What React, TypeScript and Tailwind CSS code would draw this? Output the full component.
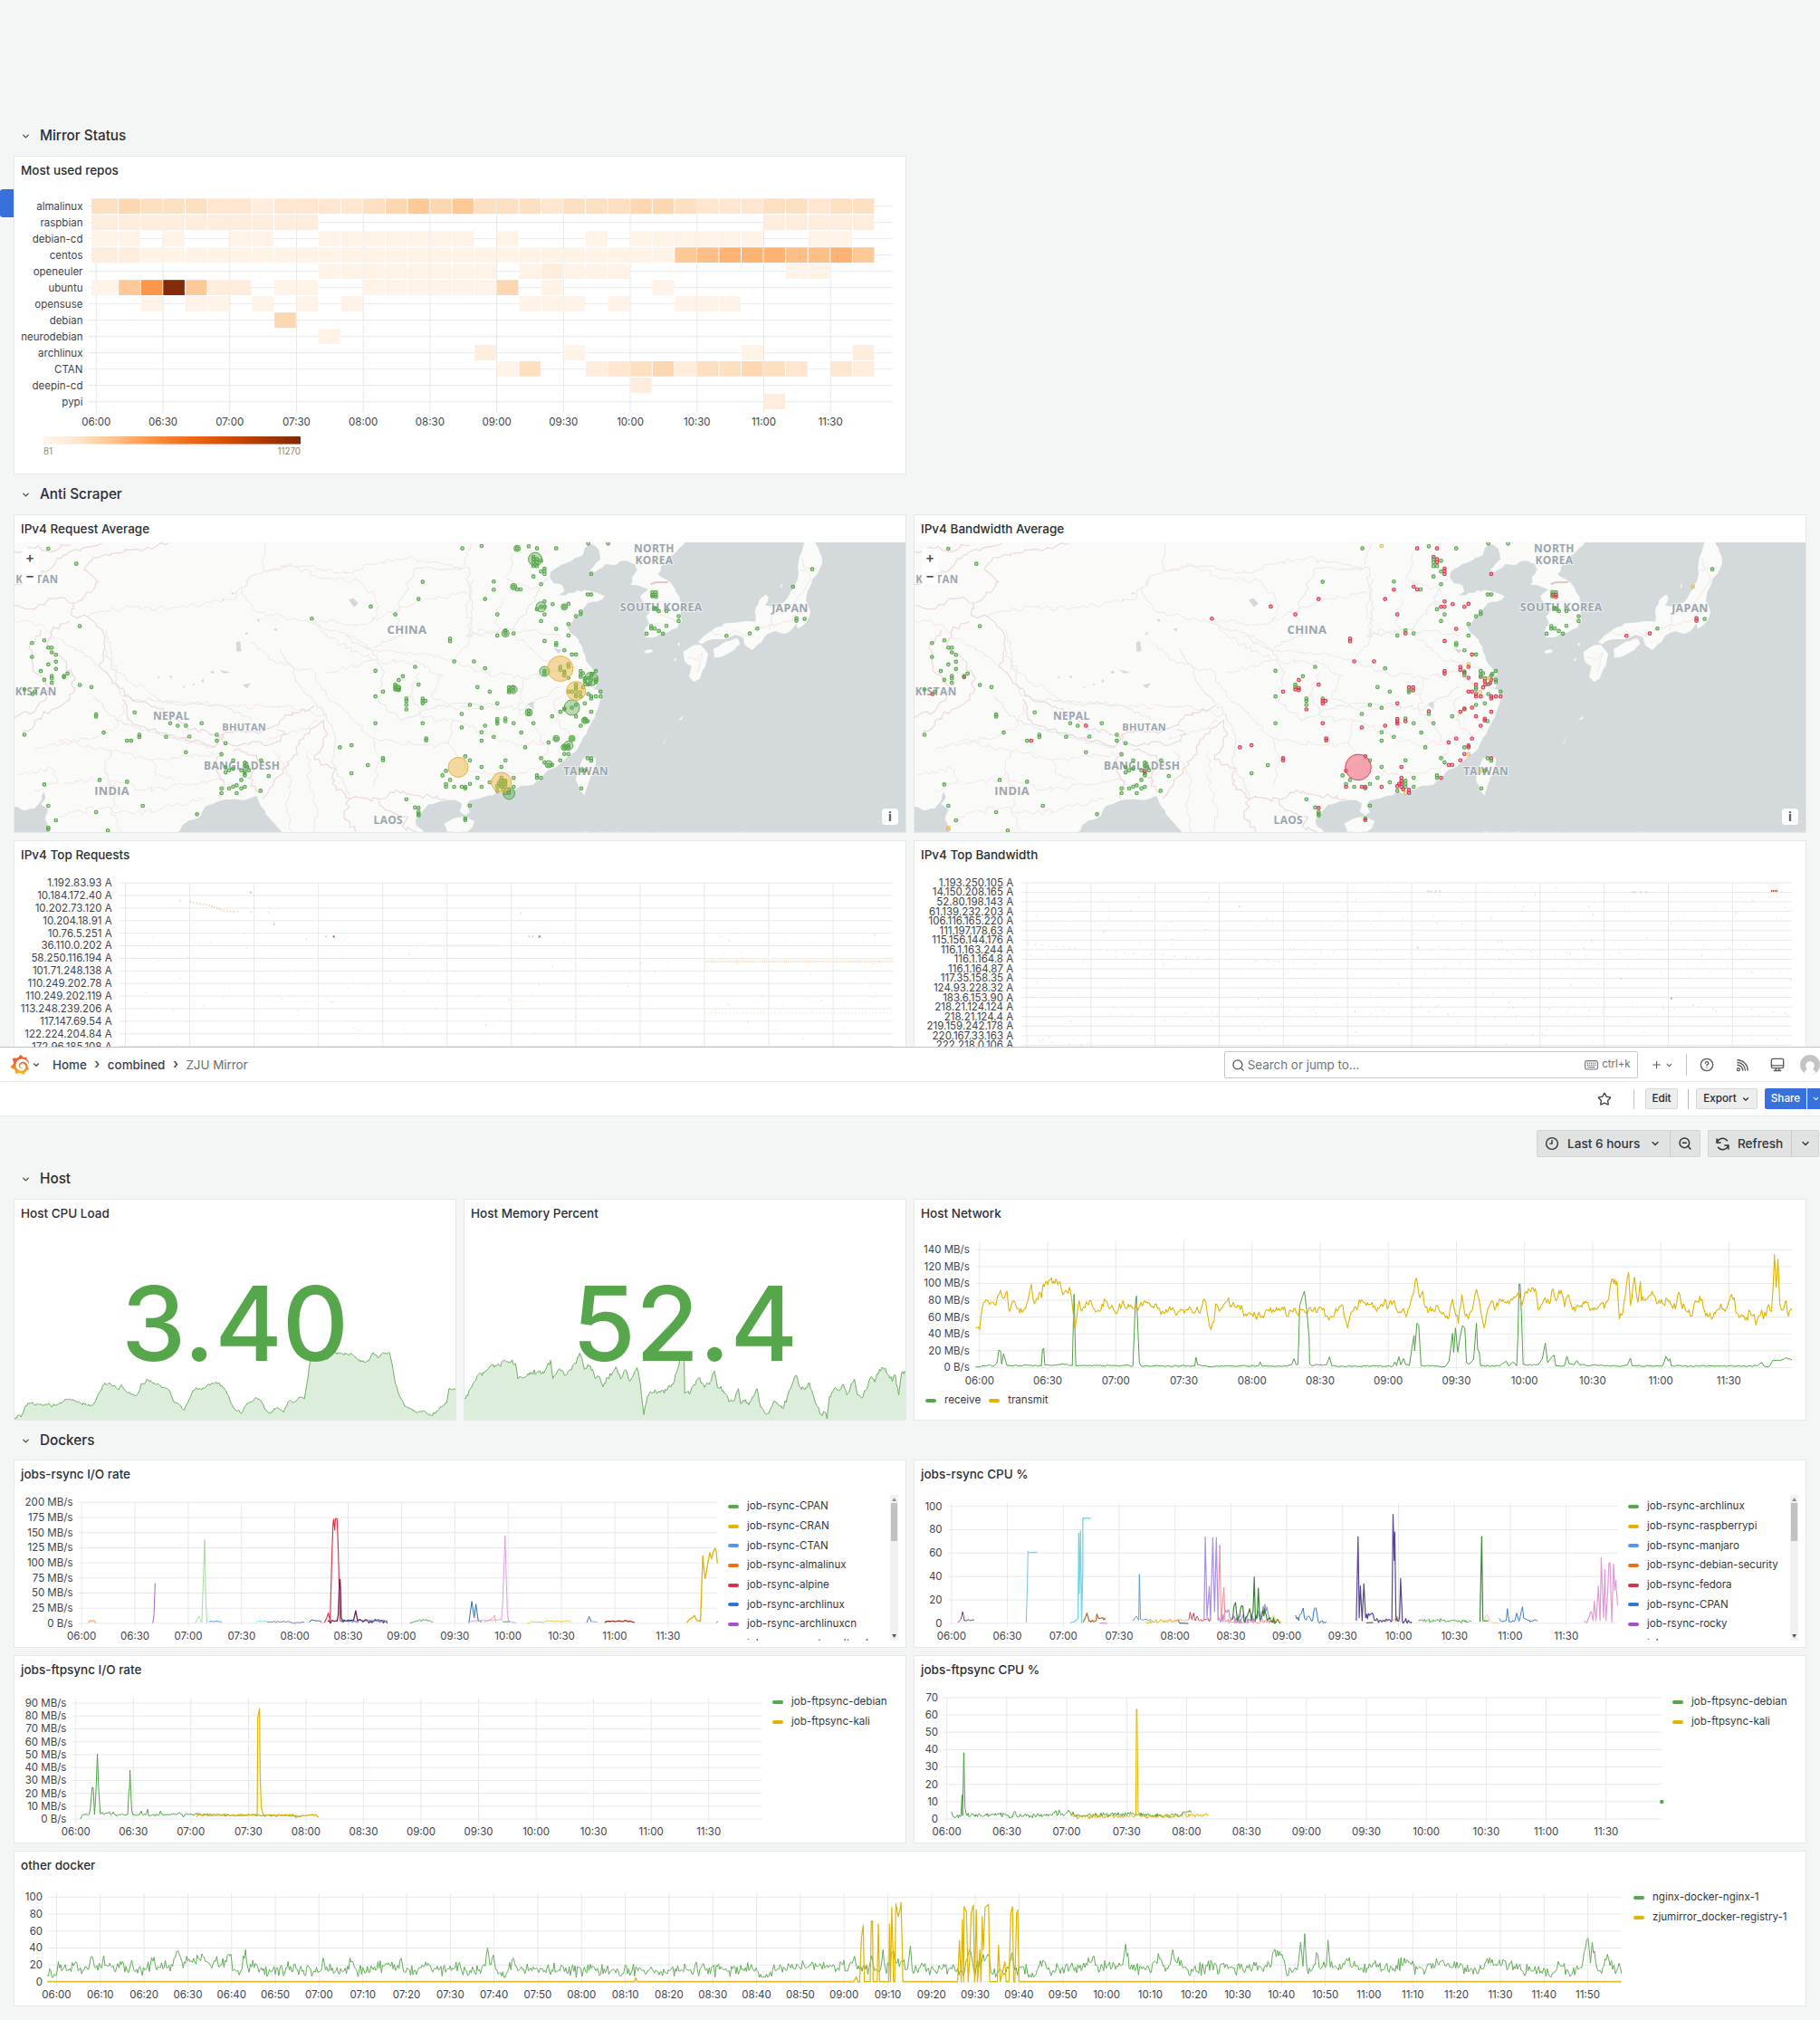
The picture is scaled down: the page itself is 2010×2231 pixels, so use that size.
import React from "react";
import { ChevronDown, Search, Star, ZoomOut, Plus } from "lucide-react";
import { SiGrafana } from "react-icons/si";

/* Plot space: chart geometry is stored on a grid of SX units per pixel across and SY down. */
const SX = 1.5525;
const SY = 3;

type Origin = [number, number];
type Pt = [number, number];

const rng = (seed: number) => {
  let s = seed * 7919 + 13;
  return () => {
    s = (s * 1664525 + 1013904223) % 4294967296;
    return s / 4294967296;
  };
};

const parse = (s: string): Pt[] =>
  s.trim().split(/\s+/).map((p) => p.split(",").map(Number) as Pt);

/* Joins the key points and fills the gaps between them with seeded jitter. */
function trace(keys: string, amp = 0, step = 2.4, seed = 1, floor = 1e9): string {
  const pts = parse(keys);
  const r = rng(seed);
  const out: Pt[] = [];
  pts.forEach((p, i) => {
    out.push(p);
    const q = pts[i + 1];
    if (!q || amp === 0) return;
    const n = Math.floor((q[0] - p[0]) / step);
    for (let k = 1; k < n; k++) {
      const t = k / n;
      const v = r() + r() - 1;
      out.push([p[0] + (q[0] - p[0]) * t, Math.min(floor, p[1] + (q[1] - p[1]) * t + v * amp)]);
    }
  });
  return "M" + out.map((p) => p[0].toFixed(1) + " " + p[1].toFixed(1)).join("L");
}

/* Like trace, but also wobbles sideways, for borders and coastlines. */
function wobble(pts: Pt[], ax: number, ay: number, seed: number, close = false): string {
  const r = rng(seed);
  const out: Pt[] = [];
  pts.forEach((p, i) => {
    out.push(p);
    const q = pts[i + 1];
    if (!q) return;
    const len = Math.hypot((q[0] - p[0]) / SX, (q[1] - p[1]) / SY);
    const n = Math.max(1, Math.floor(len / 4));
    for (let k = 1; k < n; k++) {
      const t = k / n;
      out.push([p[0] + (q[0] - p[0]) * t + (r() - 0.5) * ax, p[1] + (q[1] - p[1]) * t + (r() - 0.5) * ay]);
    }
  });
  return "M" + out.map((p) => p[0].toFixed(1) + " " + p[1].toFixed(1)).join("L") + (close ? "Z" : "");
}

type Line = { d: string; c: string; w?: number; fill?: string };
type Tick = { t: string; at: number };

const clock = (m: number) => `${String(Math.floor(m / 60)).padStart(2, "0")}:${String(m % 60).padStart(2, "0")}`;

function half(x0: number, step: number): Tick[] {
  return Array.from({ length: 12 }, (_, i) => ({ t: clock(360 + i * 30), at: x0 + step * i }));
}

function Plot(props: {
  box: [number, number, number, number];
  o: Origin;
  xs?: Tick[];
  ys?: Tick[];
  area: [number, number, number, number];
  yRight: number;
  xLabel?: number;
  lines?: Line[];
  over?: React.ReactNode;
}) {
  const { box, o, xs = [], ys = [], area, yRight, xLabel, lines = [], over } = props;
  const px = (x: number) => o[0] + x / SX;
  const py = (y: number) => o[1] + y / SY;
  return (
    <svg className="block shrink-0 font-[Inter,sans-serif]" width={box[2]} height={box[3]} viewBox={box.join(" ")}>
      <g stroke="#e6e9ea" strokeWidth={1}>
        {ys.map((t, i) => (
          <line key={i} x1={px(area[0] - 6)} x2={px(area[2])} y1={py(t.at)} y2={py(t.at)} />
        ))}
        {xs.map((t, i) => (
          <line key={i} x1={px(t.at)} x2={px(t.at)} y1={py(area[1])} y2={py(area[3] + 12)} />
        ))}
      </g>
      <g transform={`translate(${o[0]} ${o[1]}) scale(${1 / SX} ${1 / SY})`}>
        {lines.map((l, i) => (
          <path key={i} d={l.d} fill={l.fill || "none"} stroke={l.c} strokeWidth={l.w || 1} strokeLinejoin="round" vectorEffect="non-scaling-stroke" />
        ))}
      </g>
      {over}
      <g className="fill-[#3f4349] text-[11.5px]">
        {ys.map((t, i) => (
          <text key={i} x={px(yRight)} y={py(t.at) + 3.9} textAnchor="end">{t.t}</text>
        ))}
        {xLabel !== undefined && xs.map((t, i) => (
          <text key={i} x={px(t.at)} y={py(xLabel) + 4.4} textAnchor="middle">{t.t}</text>
        ))}
      </g>
    </svg>
  );
}

function Panel({ title, className, children }: { title: string; className: string; children?: React.ReactNode }) {
  return (
    <section className={"flex shrink-0 flex-col overflow-hidden border border-[#e5e8e9] bg-white " + className}>
      <h2 className="flex h-[30px] shrink-0 items-center pl-[7px] text-[13.5px] font-medium text-[#2b2e33]">{title}</h2>
      <div className="relative flex min-h-0 flex-1">{children}</div>
    </section>
  );
}

function Row({ title }: { title: string }) {
  return (
    <div className="flex h-11 items-center gap-[10px] pl-[8px] pt-px text-[15.3px] font-medium text-[#2b2e33]">
      <ChevronDown size={11} strokeWidth={3} className="text-[#4a4e54]" />
      <span>{title}</span>
    </div>
  );
}

function Key({ c, t }: { c: string; t: string }) {
  return (
    <div className="flex h-[21.7px] shrink-0 items-center gap-[9px] whitespace-nowrap text-[11.6px] text-[#34383d]">
      <span className="h-1 w-3 rounded-full" style={{ background: c }} />
      {t}
    </div>
  );
}

function ScrollBar() {
  return (
    <div className="mt-[8px] flex h-[161px] w-[9px] flex-col items-center bg-[#f1f1f1]">
      <span className="h-[9px] text-[5px] leading-[10px] text-[#8a8a8a]">▲</span>
      <span className="h-[42px] w-[7px] bg-[#c1c1c1]" />
      <span className="mt-auto h-[9px] text-[5px] leading-[8px] text-[#505050]">▼</span>
    </div>
  );
}

/* ---------- Icons ---------- */
function Glyph({ size, className, w = 2, children }: { size: number; className?: string; w?: number; children: React.ReactNode }) {
  return (
    <svg width={size} height={size} viewBox="0 0 24 24" fill="none" stroke="currentColor" strokeWidth={w} strokeLinecap="round" strokeLinejoin="round" className={"shrink-0 " + (className || "")}>
      {children}
    </svg>
  );
}
const ClockIcon = () => (
  <Glyph size={16} w={2.1}><circle cx="12" cy="12" r="9.6" /><path d="M12 6.8V12.2H8.6" /></Glyph>
);
const SyncIcon = () => (
  <Glyph size={17} w={2.2}>
    <path d="M3.2 10A9 9 0 0 1 19 6.6" />
    <path d="M3 4.2V10H8.6" />
    <path d="M20.8 14A9 9 0 0 1 5 17.4" />
    <path d="M21 19.8V14H15.4" />
  </Glyph>
);
const FeedIcon = () => (
  <Glyph size={15} className="ml-[24px]" w={2.1}>
    <circle cx="4.6" cy="19.4" r="2.4" />
    <path d="M3 11.6A9.6 9.6 0 0 1 12.4 21" />
    <path d="M3 7.2A14 14 0 0 1 16.8 21" />
    <path d="M3 2.8A18.4 18.4 0 0 1 21.2 21" />
  </Glyph>
);
const ScreenIcon = () => (
  <Glyph size={16} className="ml-[23px]" w={2}>
    <rect x="2" y="2" width="20" height="15.5" rx="2.6" />
    <path d="M2.5 13.2H21.5M9.5 17.5V21.6M14.5 17.5V21.6M6.5 21.8H17.5" />
  </Glyph>
);
const HelpIcon = () => (
  <Glyph size={16} className="ml-[14px]" w={2}>
    <circle cx="12" cy="12" r="10" />
    <path d="M9.6 9.4A2.5 2.5 0 1 1 12.6 11.8Q12 12.2 12 13.3M12 16.6V16.8" />
  </Glyph>
);
const KeysIcon = () => (
  <svg width="15" height="11" viewBox="0 0 15 11" fill="none" stroke="currentColor" className="ml-auto text-[#6f7378]">
    <rect x=".6" y=".6" width="13.8" height="9.4" rx="1.8" strokeWidth="1.1" />
    <path d="M2.6 3.2H12.6M2.6 5.3H12.6" strokeWidth="1.3" strokeDasharray="1.4 .7" />
    <path d="M3.4 7.7H11.6" strokeWidth="1.1" />
  </svg>
);

/* ---------- Heat map ---------- */
const HEAT: Record<string, string> = {
  "1": "#fff2e6", "2": "#feeddd", "3": "#fee6d0", "4": "#fddfc2", "5": "#fdd7b1",
  "6": "#fdc997", "a": "#fdbf86", "7": "#fdb374", "8": "#fd964b", "9": "#832b06",
};
const dots = (n: number) => ".".repeat(n);
const REPOS: [string, string][] = [
  ["almalinux", "45444332333345656444344455433344344"],
  ["raspbian", "2222222222" + dots(20) + "22222"],
  ["debian-cd", "11.1..11..1111111.1...1.111111..11."],
  ["centos", "22111111111111111111111111" + "6a777aa76"],
  ["openeuler", dots(10) + "11111111.12111" + dots(7) + "11.."],
  ["ubuntu", "1689622.11..1111115.1....1" + dots(9)],
  ["opensuse", "..1.11.1.1.1" + dots(7) + "111.1..111" + dots(6)],
  ["debian", dots(8) + "5" + dots(26)],
  ["neurodebian", dots(10) + "1" + dots(24)],
  ["archlinux", dots(17) + "2...1" + dots(7) + "1....2"],
  ["CTAN", dots(18) + "14..23452445" + "43.32"],
  ["deepin-cd", dots(24) + "2" + dots(10)],
  ["pypi", dots(30) + "2" + dots(4)],
];

function HeatMap() {
  const ys = REPOS.map(([t], i) => ({ t, at: 323 + i * 54 }));
  return (
    <Plot
      box={[16, 203, 984, 320]}
      o={[0, 120]}
      area={[157, 298, 1530, 996]}
      yRight={142}
      xLabel={1038}
      ys={ys}
      xs={half(165, 114.45)}
      over={
        <g>
          <g transform={`translate(0 120) scale(${1 / SX} ${1 / SY})`}>
            {REPOS.map(([n, s], r) =>
              s.split("").map((c, k) =>
                c === "." ? null : (
                  <rect key={n + k} x={165.5 + k * 38.14 - (k ? 0 : 8.5)} y={298 + r * 53.9} width={36.6 + (k ? 0 : 8.5)} height={50.5} fill={HEAT[c]} />
                )
              )
            )}
          </g>
          <defs>
            <linearGradient id="oranges">
              <stop offset="0" stopColor="#fff5eb" />
              <stop offset=".13" stopColor="#fee6ce" />
              <stop offset=".27" stopColor="#fdc38d" />
              <stop offset=".42" stopColor="#fd9243" />
              <stop offset=".6" stopColor="#ec620f" />
              <stop offset=".75" stopColor="#cc4602" />
              <stop offset="1" stopColor="#7f2704" />
            </linearGradient>
          </defs>
          <rect x={48} y={482} width={284} height={8.6} rx={1} fill="url(#oranges)" />
          <g className="fill-[#85888c] text-[9.8px]">
            <text x={48} y={502}>81</text>
            <text x={332} y={502} textAnchor="end">11270</text>
          </g>
        </g>
      }
    />
  );
}

/* ---------- Maps ---------- */
const ring = (s: string): Pt[] => {
  const n = s.trim().split(/\s+/).map(Number);
  const out: Pt[] = [];
  for (let i = 0; i < n.length; i += 2) out.push([n[i], n[i + 1]]);
  return out;
};
const SEA = [
  "1175 209 1165 228 1148 255 1134 290 1128 315 1145 335 1158 365 1166 400 1168 440 1170 470 1162 492 1140 510 1125 522 1108 524 1105 505 1113 480 1108 455 1117 430 1105 412 1098 388 1112 366 1098 355 1082 350 1084 325 1093 300 1088 280 1070 270 1052 285 1038 282 1020 308 1012 300 1030 265 1026 230 1014 215 1003 228 1000 250 975 275 958 290 944 308 943 325 950 345 965 352 968 372 958 385 970 385 990 368 1015 372 1037 388 1032 400 1008 410 1000 430 985 460 973 490 978 508 992 530 1000 570 1005 600 1015 625 1026 650 1010 652 1004 664 1024 672 1022 690 1006 690 1028 700 1034 722 1028 745 1020 790 1008 830 994 880 982 910 960 945 940 965 930 992 915 1012 890 1020 878 1030 868 1044 855 1035 845 1048 820 1060 805 1066 800 1082 806 1104 798 1115 788 1100 792 1075 782 1064 768 1064 755 1068 735 1078 725 1100 713 1128 716 1152 728 1172 1556 1172 1556 206 1176 206",
  "22 1085 45 1098 60 1092 72 1062 75 1036 78 1060 70 1078 82 1092 78 1130 84 1172 22 1172",
  "305 1172 318 1140 345 1115 352 1085 372 1070 395 1062 415 1064 440 1050 450 1090 465 1130 485 1172",
];
const LAND = [
  "762 1142 778 1124 800 1120 814 1134 810 1155 800 1170 768 1170",
  "1000 925 1012 914 1022 926 1019 960 1011 1000 1002 1050 994 1030 988 1000 992 960",
  "1380 206 1398 206 1408 250 1410 280 1403 310 1393 332 1385 370 1382 400 1390 440 1380 480 1368 495 1366 478 1352 508 1345 512 1330 503 1312 520 1306 540 1290 566 1278 550 1275 525 1262 515 1240 530 1222 530 1205 546 1197 540 1210 515 1230 490 1250 476 1280 470 1296 472 1295 440 1302 400 1314 382 1318 392 1312 418 1330 422 1346 405 1362 360 1370 310 1370 270 1375 240",
  "1172 572 1190 550 1202 548 1215 580 1210 620 1200 662 1190 672 1182 655 1186 620 1174 602",
  "1225 592 1224 562 1245 538 1265 528 1270 545 1252 575 1236 590",
  "1104 572 1116 563 1120 570 1108 578",
  "1338 352 1342 346 1340 362",
  "1163 800 1172 784 1170 796",
  "1134 880 1146 852 1140 874",
  "1162 545 1166 540 1165 555",
  "1155 600 1160 592 1159 604",
];
const LAKES = "M598 400L606 394 615 412 607 424ZM380 398L384 396 383 404ZM396 374L404 378 399 382ZM405 540L412 536 414 570 406 572ZM360 640L366 634 368 646ZM376 632L396 640 384 644ZM416 682L430 676 424 694ZM345 668L350 662 349 676ZM313 690L318 684 317 692ZM905 745L915 735 916 765ZM420 515L424 505 426 514ZM468 496L476 494 474 504ZM950 560L964 566 958 578ZM440 466L446 462 445 474ZM290 655L294 650 296 660ZM270 655L273 652 274 662ZM330 680L334 676 334 684Z";
const BORDERS = [
  "25,420 60,430 85,395 110,392 125,410 122,450 150,455 175,500 180,560 170,620 200,680 215,720 240,740 270,760 300,790 330,830 380,850 400,840 450,835 480,800 510,775 540,750",
  "25,350 55,330 85,300 110,250 140,230 175,212",
  "25,240 50,225 90,240 120,215",
  "210,730 225,800 270,840 330,870 372,880 375,850",
  "380,845 385,880 470,875 490,845 475,830",
  "380,900 370,940 385,1000 378,1060",
  "400,900 440,915 450,940 425,990 445,1040",
  "450,1060 470,1000 500,930 520,860 555,800 560,850 540,930 575,960 570,1010 600,1060 650,1060 680,1030 720,1050 765,1060",
  "600,1060 590,1110 610,1170",
  "650,1065 670,1100 700,1120 690,1150 715,1170",
  "40,850 60,800 95,760 120,730 130,660 110,600 80,560 90,500 120,470",
  "25,790 60,770 90,700 60,640 50,560 70,500",
  "125,410 140,400 170,340 145,300 160,260 250,230 290,212",
];
const PROVINCES = [
  "150,455 210,430 300,425 400,400 430,320 500,285 600,310 640,280 700,260 790,300 810,209",
  "430,320 415,380 440,440 520,470 600,520 640,570 720,580 780,600",
  "455,209 452,300 500,285",
  "180,500 188,560 200,640 280,740 400,750 520,760 560,790",
  "430,540 470,600 540,640 560,720 600,790 640,860 650,940 640,1020",
  "560,640 640,600 720,610 760,650 740,720 780,760 860,760",
  "800,520 830,500 900,500 960,520",
  "810,330 800,430 810,520 780,600 830,640 900,660 960,640",
  "860,400 850,480 900,540 930,600 990,620",
  "720,640 700,720 730,790 800,810 850,860 900,880 960,860",
  "780,800 770,880 800,960 860,980 920,960",
  "640,860 720,880 770,880",
  "900,660 890,760 920,830 940,900 925,960",
  "880,240 870,330 930,370",
  "640,600 560,520 540,470 620,480 680,440 720,400 800,380",
  "500,285 560,330 620,340 650,420 640,470",
  "25,470 70,480 110,540 170,620",
  "60,900 110,870 190,900 260,930 330,920 380,905",
  "110,1010 180,990 250,1030 330,1010 380,1000",
  "95,1120 170,1090 230,1110 300,1080 350,1060",
  "190,900 180,960 200,1040 190,1110 210,1170",
  "100,870 150,860 200,820 215,740",
  "30,980 90,960 100,1010 60,1030",
  "260,930 270,980 300,1000",
  "470,900 500,1000 490,1080 500,1170",
  "530,900 530,1000 545,1100 540,1170",
  "460,860 520,830 545,800",
  "960,640 990,690 950,740 960,820 985,860",
  "1120,209 1110,260 1095,290",
  "1120,400 1150,410 1130,450 1160,470",
  "1215,505 1240,520 1262,500 1280,520 1300,490 1340,480 1380,440",
  "1320,500 1325,450 1350,430 1385,420",
  "1375,260 1390,330 1370,390 1340,450",
  "1372,300 1404,290",
  "1178,590 1195,600 1205,575 1195,640",
];
const RIVERS = [
  "480,560 520,700 560,780 575,850 570,940 600,1050",
  "590,520 640,570 660,640 650,740 690,800 740,760 800,740 900,760 960,690",
  "640,560 690,520 680,440 710,300 800,290 812,430 800,520 880,500 940,330",
  "160,720 200,800 300,860 370,890",
  "180,560 210,720 280,740 380,750 430,800",
];

const PINS = `83,230 131,280 137,487 76,534 55,543 83,558 89,558 89,574 96,582 55,589 96,605 83,614 96,629 70,636 116,644 110,656r 110,652 89,652 89,660 76,665 89,675 137,682 157,689 42,697 56,712r 60,704 165,780 165,787 231,773 42,847 178,840 292,809 305,817 319,817r 346,809 239,847 239,855 285,854 325,853 372,847 372,867 387,875 218,867 225,867r 319,905 380,912 400,932 448,932 76,1012 171,997 218,1003 461,984 380,1025 393,1025 380,1041 406,1041 447,1033 406,1015 420,1020 400,1019 414,997 414,1025 83,1083 245,1083 165,1104 338,1111 96,1131 83,1155y 83,1161y 185,1165 387,955 393,965 420,940 420,950 427,965 420,975 387,972 414,965 424,955 400,960 420,968r 420,982
793,229 826,221y 887,229r 907,222 921,229r 954,229 1009,213 1043,213 915,257r 921,265r 915,265 921,275r 928,270 915,275 915,288 921,288 934,296r 934,304r 928,306 934,314r 915,322 1014,314r 847,339 725,340 928,348 881,356r 887,365r 893,365 847,366r 718,397r 832,397r 934,405r 1008,382 1014,382 948,414r 975,413r 968,423r 928,423r 934,423r 636,422r 921,431 678,448r 853,448r 934,448 996,439 996,447 988,454 928,470 535,462r 975,480 954,496r 867,501 867,511r 881,511 853,518 975,518 772,528r 772,537r 934,536r 954,543 954,550 968,567 981,581r 988,581 779,604r 813,604r 975,613y 961,622r 975,622r 712,622 832,627 644,635 961,632r 968,637 968,642r 1022,636 934,636r 934,644r 996,636 1000,643 968,650 975,658r 1014,650 691,653 684,666r 678,681 718,681r 678,689 684,692r 678,697r 684,699r 657,704r 819,689 840,704 873,690r 880,690r 873,700 880,700r 873,706 988,681r 1014,665r 996,655r 1009,660y 1003,660 1003,670r 1022,672 1022,665 988,690 1000,690r 1009,680 975,704r 981,704r 988,697 995,706y 988,712r 1009,712 1030,704 1030,720r 1022,720r 1014,720r 1014,727r 988,720r 996,720r 1003,743 988,748 996,648 1016,645 1004,680r 1012,676r 644,720 697,727 697,735 697,748 697,763r 725,727 730,735r 725,743r 725,735r 806,748 853,743r 826,758 792,778 907,769r 907,778 1014,771r 961,771r 968,763 968,760r 981,757r 947,786 988,786r 1003,794r 1008,802 1003,800r 996,817r 867,793 853,795r 853,803r 867,802r 853,810r 881,809 915,809 644,809 725,809r 792,823r 832,817r 826,839 894,840 847,854 731,859r 731,866r 826,867 954,860r 981,860r 941,873r 583,889r 603,882r 901,889 975,883r 968,889 975,889r 968,911r 975,911y 798,919r 806,932 657,925r 657,932r 631,948 928,925 867,932 961,932r 934,939 941,947r 947,947r 1008,925 1014,925r 1014,933 603,975 765,967r 826,954 860,954r 759,982 772,997 819,990 881,990 921,982 921,990 928,990r 840,1005 765,1011 765,1020r 779,1020 792,1020r 798,1025 806,1010 798,1020r 826,1020r 860,990r 860,1000r 867,1000 860,1010r 853,1018r 867,1010 860,1020r 853,1033 867,1020 873,1030r 867,1040y 873,1040r 863,1028r 856,1010r 881,1020 997,1025 997,965y 1003,965 697,1061 712,1088 718,1090r 718,1103 718,1110 718,1115 806,1082 798,1125 798,1130r
1119,374 1125,374 1119,383r 1125,383r 1119,388 1125,390r 1122,428 1125,430 1130,437 1143,437 1164,454 1164,470 1143,486 1117,487 1117,495 1123,495 1130,503 1137,512 1109,512 1393,298 1360,356y 1366,461r 1366,469r 1380,463 1299,495 1286,511r 1246,519r`;

const BUBBLES_GREEN = "918,265,7.5 887,229,3.5 881,356,3.5 928,423,5.5 968,423,3.5 867,511,4 934,637,5.5 1014,662,7.5 981,757,8.5 880,697,4.5 907,773,4 975,883,5 941,945,4 873,1042,6.5 954,860,3.5 1003,800,3.5 682,692,3.5 981,860,3.5 968,889,3.5 861,1008,5";
const BUBBLES_YELLOW = "961,628,14 988,702,10.5 786,955,11 860,1005,11";
const PLACES: [string, number, number, number][] = [
  ["CHINA", 698, 499, 13], ["NORTH", 1122, 230, 12], ["KOREA", 1122, 267, 12], ["SOUTH KOREA", 1134, 425, 12.4],
  ["JAPAN", 1355, 426, 12.4], ["NEPAL", 294, 786, 12], ["BHUTAN", 419, 823, 11], ["BANGLADESH", 415, 950, 12],
  ["INDIA", 192, 1034, 12.8], ["LAOS", 666, 1130, 12], ["TAIWAN", 1005, 968, 11.8],
];

function GeoMap({ mode }: { mode: "req" | "bw" }) {
  const paint: Record<string, [string, string]> = {
    g: ["#56a64b66", "#56a64b"], r: ["#e02f4466", "#d9364b"], y: ["#f2cc0c44", "#e3bb55"],
  };
  const bubble = (list: string, fill: string, stroke: string) =>
    list.split(" ").map((b) => {
      const [x, y, r] = b.split(",").map(Number);
      return <ellipse key={b} cx={x} cy={y} rx={r * SX} ry={r * SY} fill={fill} stroke={stroke} strokeWidth={1} vectorEffect="non-scaling-stroke" />;
    });
  return (
    <>
      <svg className="block h-full w-full bg-[#fafaf8]" viewBox="25 209 1528 961" preserveAspectRatio="none">
        {PROVINCES.slice(0, 28).map((k, i) => <path key={k} d={wobble(parse(k), 9, 18, i + 31)} fill="none" stroke="#f3e6e5" strokeWidth={1} vectorEffect="non-scaling-stroke" />)}
        {RIVERS.map((k, i) => <path key={k} d={wobble(parse(k), 8, 16, i + 61)} fill="none" stroke="#e6eaec" strokeWidth={1.1} vectorEffect="non-scaling-stroke" />)}
        {SEA.map((d, i) => <path key={d} d={wobble(ring(d), 4, 7, i + 5, true)} fill="#d4dadc" />)}
        {LAND.map((d, i) => <path key={d} d={wobble(ring(d), 3, 5, i + 15, true)} fill="#fafaf8" />)}
        <path d={LAKES} fill="#d4dadc" />
        {PROVINCES.slice(28).map((k, i) => <path key={k} d={wobble(parse(k), 6, 12, i + 71)} fill="none" stroke="#f3e6e5" strokeWidth={1} vectorEffect="non-scaling-stroke" />)}
        {BORDERS.map((k, i) => <path key={k} d={wobble(parse(k), 9, 18, i + 3)} fill="none" stroke="#ecd6d8" strokeWidth={1.1} vectorEffect="non-scaling-stroke" />)}
        <path d="M1116 348L1124 342 1146 341" fill="none" stroke="#e3c3c8" strokeWidth={2} vectorEffect="non-scaling-stroke" />
        <g transform={`scale(${SX} ${SY})`} className="font-['Open_Sans',sans-serif] font-bold" fill="#9aa5af" stroke="#fafaf8" strokeWidth={2} paintOrder="stroke" strokeOpacity={0.7} letterSpacing={0.3}>
          {PLACES.map(([t, x, y, s]) => (
            <text key={t} x={x / SX} y={y / SY + s * 0.36} fontSize={s} textAnchor="middle">{t}</text>
          ))}
          <text x={27 / SX} y={330 / SY + 4.3} fontSize={11.5}>K</text>
          <text x={100 / SX} y={330 / SY + 4.3} fontSize={11.5} textAnchor="end">TAN</text>
          <text x={26 / SX} y={705 / SY + 4.3} fontSize={11.8} letterSpacing={0.6}>KISTAN</text>
        </g>
        {PINS.split(/\s+/).map((p, i) => {
          const m = p.match(/^(\d+),(\d+)([ry]?)$/);
          if (!m) return null;
          const k = mode === "bw" && m[3] ? m[3] : "g";
          return <ellipse key={i} cx={+m[1]} cy={+m[2]} rx={2.8} ry={5.3} fill={paint[k][0]} stroke={paint[k][1]} strokeWidth={1.1} vectorEffect="non-scaling-stroke" />;
        })}
        {mode === "req" ? (
          <>
            {bubble(BUBBLES_GREEN, "#56a64b66", "#56a64b")}
            {bubble(BUBBLES_YELLOW, "#ecb84180", "#e6b54a")}
          </>
        ) : (
          bubble("786,955,14.3", "#ee6a7e99", "#d9475d")
        )}
      </svg>
      <div className="absolute left-[8px] top-[7px] flex w-[18px] flex-col gap-px text-center text-[15px] font-semibold leading-[19px] text-[#4d5156]">
        <span className="h-[19px] rounded-t-sm bg-white">+</span>
        <span className="h-[19px] rounded-b-sm bg-white">−</span>
      </div>
      <div className="absolute bottom-[8px] right-[8px] h-[18px] w-[18px] rounded-sm bg-white text-center text-[14px] font-bold leading-[18px] text-[#55595e]">i</div>
    </>
  );
}

/* ---------- Top talkers ---------- */
const REQ_IPS = ["1.192.83.93", "10.184.172.40", "10.202.73.120", "10.204.18.91", "10.76.5.251", "36.110.0.202", "58.250.116.194", "101.71.248.138", "110.249.202.78", "110.249.202.119", "113.248.239.206", "117.147.69.54", "122.224.204.84", "172.96.185.108"];
const BW_IPS = ["1.193.250.105", "14.150.208.165", "52.80.198.143", "61.139.232.203", "106.116.165.220", "111.197.178.63", "115.156.144.176", "116.1.163.244", "116.1.164.8", "116.1.164.87", "117.35.158.35", "124.93.228.32", "183.6.153.90", "218.21.124.124", "218.21.124.4", "219.159.242.178", "220.167.33.163", "222.218.0.106"];

function specks(n: number, seed: number, x0: number, x1: number, y0: number, y1: number) {
  const r = rng(seed);
  return Array.from({ length: n }, (_, i) => (
    <rect key={i} x={x0 + r() * (x1 - x0)} y={y0 + r() * (y1 - y0)} width={1} height={1.8} fill={r() > 0.85 ? "#f8d5b8" : "#fceadc"} />
  ));
}

const dash = (pts: string, c: string) =>
  parse(pts).map(([x, y], i) => <rect key={i} x={x / SX} y={920 + y / SY} width={1.3} height={2} fill={c} />);

function run(x0: number, x1: number, y: number, dx: number) {
  const a: string[] = [];
  for (let x = x0; x < x1; x += dx) a.push(`${x},${y}`);
  return a.join(" ");
}

function TopRequests() {
  return (
    <Plot
      box={[16, 959, 984, 240]}
      o={[0, 920]}
      area={[210, 166, 1530, 900]}
      yRight={192}
      ys={REQ_IPS.map((t, i) => ({ t: t + " A", at: 165.5 + i * 41.65 }))}
      xs={half(215, 110.3)}
      over={
        <g>
          {specks(190, 5, 140, 984, 1030, 1156)}
          {dash("308,223 326,225 331,228 337,230 342,232 348,233 353,235 358,237 362,240 366,243 371,246 375,248 378,251 382,254 388,256 394,257 400,257 406,257 429,258 459,260 892,262 1499,334", "#f5d3b3")}
          {dash("429,194 469,299", "#d9ab8c")}
          {dash("571,340 924,340", "#8f4a26")}
          {dash("573,341 922,341 926,341 558,340 906,340 912,340", "#e9b695")}
          {dash(run(1208, 1528, 415, 3.4), "#fdf1e6")}
          {dash(run(1208, 1528, 423, 3.4), "#fadfc6")}
          {dash(run(1208, 1528, 594, 6), "#fcebdc")}
          {dash(run(460, 1098, 555, 5), "#fdf3ea")}
          {dash(run(730, 865, 370, 6), "#fcebdd")}
        </g>
      }
    />
  );
}

function TopBandwidth() {
  return (
    <Plot
      box={[1010, 959, 984, 240]}
      o={[1000, 920]}
      area={[204, 166, 1520, 900]}
      yRight={185}
      ys={BW_IPS.map((t, i) => ({ t: t + " A", at: 165 + i * 31.65 }))}
      xs={half(208, 110)}
      over={
        <g>
          {specks(420, 9, 1135, 1978, 978, 1156)}
          {specks(120, 19, 1400, 1978, 1035, 1075)}
          {specks(90, 29, 1200, 1978, 1108, 1125)}
          <g transform="translate(1000 0)">
            {dash("1484,189 1487,189 1490,189 1493,189", "#a3603a")}
            {dash("1246,193 1250,193 1260,193 1269,193 895,190 900,190 908,190 915,190 572,241 1225,479 877,376", "#f0c4a2")}
            {dash("1312,545", "#e07a35")}
            {dash("210,363 222,366 234,369 246,371 258,373 270,374 280,376 290,378 330,384 345,388 360,391 375,395 390,397 420,399 440,401 460,405 480,408 500,411 520,413 540,415 600,420 620,421 640,423 210,685 230,688 250,692 280,697 300,700", "#fae3d0")}
          </g>
        </g>
      }
    />
  );
}

/* ---------- Host ---------- */
const CPU = "25,984 28,982 32,972 36,978 42,950 48,932 58,935 66,934 74,939 82,936 90,942 98,938 104,932 112,918 124,922 136,930 148,938 158,940 164,925 170,898 178,872 188,865 196,873 203,888 208,872 216,892 224,902 232,907 238,895 242,868 248,868 252,852 262,866 272,870 280,880 290,888 298,928 308,938 316,955 324,920 330,892 338,882 346,888 352,880 358,868 374,866 382,880 388,892 396,932 404,955 414,965 424,932 432,928 440,915 448,925 454,952 464,966 470,950 476,946 486,962 494,928 500,926 506,928 514,912 522,918 526,870 532,790 545,780 560,786 572,765 584,768 604,770 614,790 626,798 634,785 640,765 648,782 656,766 668,766 672,800 678,868 686,912 694,942 704,952 714,962 726,958 740,974 752,955 766,930 770,884 776,888 784,884";
const MEM = "796,914 802,908 808,880 818,842 830,832 840,810 856,806 862,792 876,796 884,800 888,852 900,846 912,830 922,828 934,825 944,790 948,850 958,820 968,840 978,822 986,800 994,766 1002,820 1012,808 1022,850 1028,845 1034,878 1042,848 1050,832 1056,812 1064,852 1072,822 1080,860 1086,840 1092,814 1098,870 1104,970 1110,910 1118,900 1130,892 1144,888 1154,870 1160,830 1166,786 1173,786 1174,900 1184,895 1190,870 1198,848 1208,880 1216,870 1225,826 1230,880 1240,890 1246,905 1250,928 1258,926 1266,884 1270,934 1278,920 1284,938 1292,910 1298,884 1304,944 1312,966 1320,955 1328,924 1336,940 1344,944 1350,910 1356,882 1364,840 1372,880 1380,888 1386,866 1392,890 1400,940 1408,970 1414,962 1418,984 1422,910 1430,885 1440,890 1446,870 1452,905 1458,880 1465,852 1470,905 1480,910 1488,875 1494,844 1500,862 1508,820 1518,816 1524,840 1530,860 1535,838 1541,905 1546,830 1555,826";

function Stat({ value, keys, box, seed, amp }: { value: string; keys: string; box: [number, number, number, number]; seed: number; amp: number }) {
  const line = trace(keys, amp, 1.7, seed, 985);
  const pts = parse(keys);
  const a = pts[0][0];
  const b = pts[pts.length - 1][0];
  return (
    <>
      <Plot box={box} o={[0, 1240]} area={[0, 0, 0, 0]} yRight={0} lines={[
        { d: `${line}L${b} 987L${a} 987Z`, c: "none", fill: "#dceddb" },
        { d: line, c: "#6db063" },
      ]} />
      <div className="absolute inset-x-0 top-[44px] text-center text-[113.7px] font-medium leading-[126px] text-[#56a64b]">{value}</div>
    </>
  );
}

const TX = "120,530 123,528 127,535 131,470 134,445 142,440 152,450 155,455 158,425 163,405 170,430 174,408 177,465 185,440 190,460 196,480 204,465 210,440 216,385 221,450 229,415 233,430 236,385 242,375 254,375 265,378 270,420 275,405 279,415 281,395 284,420 287,470 290,530 294,490 298,440 302,475 306,460 312,450 320,455 328,475 335,472 343,440 348,460 354,455 362,483 367,450 375,455 380,465 388,460 400,465 412,445 422,460 430,450 438,485 445,480 453,460 462,480 470,475 480,470 487,460 494,480 500,460 505,480 511,435 515,445 520,510 524,535 529,510 532,450 538,475 545,455 552,440 560,455 570,455 578,470 585,490 592,485 600,490 612,490 622,470 632,475 640,465 650,460 653,490 662,475 668,465 674,490 678,470 690,480 700,470 708,465 715,470 722,490 728,495 740,475 750,455 758,530 764,480 774,470 780,445 790,455 800,445 808,475 816,450 822,435 828,460 838,440 845,480 852,470 860,485 866,445 870,420 876,365 882,430 887,410 890,455 896,480 900,460 906,475 912,455 918,480 930,500 938,435 944,490 948,515 954,420 960,490 965,500 972,470 979,402 986,470 992,530 998,470 1005,440 1010,470 1018,435 1028,445 1035,450 1045,430 1052,410 1057,455 1062,415 1070,405 1080,400 1085,470 1092,450 1097,430 1104,450 1110,400 1115,440 1124,405 1130,460 1137,420 1144,470 1152,455 1160,460 1170,445 1176,468 1185,468 1192,450 1200,450 1206,430 1211,368 1220,375 1224,500 1230,480 1236,390 1240,346 1243,455 1250,362 1256,445 1260,376 1262,440 1270,435 1282,420 1288,450 1300,450 1310,440 1316,465 1322,450 1326,412 1330,450 1340,475 1349,490 1354,440 1366,435 1372,490 1385,492 1398,450 1405,475 1414,430 1421,430 1424,480 1435,490 1442,495 1448,475 1455,485 1458,520 1463,490 1468,470 1471,500 1478,460 1485,475 1488,380 1490,287 1493,395 1496,302 1499,450 1502,470 1510,440 1514,490 1520,465";
const RX = "120,659 128,659 132,655 142,653 152,656 157,645 160,604 163,606 165,650 168,616 172,640 174,655 192,655 216,654 233,656 235,600 237,598 239,654 262,652 272,650 286,655 289,418 292,655 300,655 340,655 376,654 390,656 394,455 396,424 398,510 401,645 404,656 450,656 496,656 498,627 501,652 512,656 525,659 535,656 605,656 608,642 611,656 655,656 662,652 666,632 670,652 673,650 676,455 684,408 688,470 692,560 693,650 697,655 706,650 714,654 722,652 727,626 731,656 757,658 800,656 836,656 839,642 842,655 846,625 849,652 854,632 858,652 864,655 868,600 872,555 873,605 877,514 880,520 884,655 925,658 932,640 938,548 940,612 943,530 947,610 951,560 955,522 959,530 962,645 966,650 974,635 979,514 981,600 984,612 986,655 1018,656 1030,640 1034,656 1042,642 1048,656 1050,560 1052,384 1054,386 1056,480 1059,650 1064,653 1085,652 1092,632 1097,580 1101,645 1106,632 1112,620 1115,656 1130,655 1134,624 1138,648 1146,652 1151,638 1156,652 1200,656 1215,654 1225,658 1238,652 1243,630 1246,656 1298,656 1304,624 1308,640 1311,632 1313,656 1400,656 1460,656 1468,644 1472,656 1482,656 1487,638 1500,638 1508,630 1516,632 1520,636";

/* ---------- Dockers ---------- */
const IO_LINES: Line[] = [
  { d: trace("152,667 154,660 162,660 164,668", 3), c: "#f2823a" },
  { d: trace("262,668 264,640 266,536"), c: "#a565c8" },
  { d: trace("335,668 341,645 346,666 349,500 351,392 353,600 355,668"), c: "#a6dba0" },
  { d: trace("358,665 360,662 378,662 380,667", 4), c: "#5794f2" },
  { d: trace("438,668 442,661 458,662", 3), c: "#8ee0ee" },
  { d: trace("458,664 496,664 502,667 522,664", 4, 2.4, 4), c: "#7d80a0" },
  { d: trace("530,666 534,657 550,662 552,667", 4), c: "#2e5fa8" },
  { d: trace("556,667 560,652 563,634 566,660 569,450 571,340 572,324 574,360 575,322 578,322 580,430 583,660 590,665", 0), c: "#e0394e", w: 1.2 },
  { d: trace("562,662 578,661 580,640 582,530 583,523 584,560 585,650 590,658 606,660 610,627 613,660 662,662 664,668", 7, 2.2, 6, 668), c: "#70244f", w: 1.3 },
  { d: trace("586,662 664,660", 8, 3, 12, 668), c: "#3e6aa8" },
  { d: trace("630,660 664,661", 5, 3, 15, 668), c: "#a7a3e0" },
  { d: trace("703,667 712,662 730,657 742,665", 5, 2.4, 4, 668), c: "#56a64b" },
  { d: trace("804,667 809,596 813,650 816,605 820,660 826,664"), c: "#2f6dad" },
  { d: trace("806,663 830,658 860,658 862,600 866,379 870,640 872,660 884,667", 3, 2.4, 3, 668), c: "#d9a3e0" },
  { d: trace("830,665 843,655 848,642 850,665"), c: "#f5a095" },
  { d: trace("862,664 874,664", 4, 2, 3, 668), c: "#5f8f5a" },
  { d: trace("904,667 916,665 944,662 978,662 980,667", 5, 3, 8, 669), c: "#e6cf3e" },
  { d: trace("1006,667 1010,646 1014,664"), c: "#3274d9" },
  { d: trace("1014,662 1024,664", 3), c: "#a4aad6" },
  { d: trace("1037,667 1039,663 1074,660 1080,661 1088,666", 3, 2.4, 3), c: "#a1382c", w: 1.3 },
  { d: trace("1177,667 1182,655 1187,650 1191,643 1195,660 1201,662 1203,550 1205,445 1208,510 1209,520 1213,475 1217,434 1220,455 1223,432 1226,420 1228,430 1230,470", 5, 1.6), c: "#e0b400", w: 1.3 },
  { d: trace("1228,667 1231,663"), c: "#56a64b" },
];
const CPU_LINES: Line[] = [
  { d: trace("90,575 95,565 98,540 101,570 106,568 118,568", 5, 1.4), c: "#7a3b77" },
  { d: trace("207,577 209,450 210,340 213,344 226,343"), c: "#7cc0e8" },
  { d: trace("283,577 292,570 296,560 297,280 298,480 300,272 302,577 304,400 304,230 318,230", 4), c: "#6fd5e6", w: 1.3 },
  { d: trace("305,575 311,545 315,572 327,570 328,548 331,563 343,562", 6, 1.4), c: "#b56a2b", w: 1.2 },
  { d: trace("333,578 346,579"), c: "#bb80d8" },
  { d: trace("390,570 396,555 400,568 401,416 403,565 422,568", 7), c: "#5b9fd8" },
  { d: trace("412,574 470,570", 8, 1.6, 5, 578), c: "#e0b400" },
  { d: trace("450,570 486,568", 7, 1.8, 7), c: "#f4b08c" },
  { d: trace("468,570 470,578 485,579"), c: "#3b5068" },
  { d: trace("486,566 488,542 491,566 494,545 497,570 500,555 504,570 522,565", 8, 1.3), c: "#e0394e" },
  { d: trace("512,568 514,292 517,560 521,456 523,570 527,295 530,540 533,295 536,568 550,540 560,560 580,565 600,566 620,525 626,575", 22, 1.3, 3, 578), c: "#a993dc", w: 1.2 },
  { d: trace("536,570 538,390 539,320 541,570 546,460 548,572 560,574 600,575 640,570", 10, 1.6, 4, 579), c: "#f08f95" },
  { d: trace("560,565 566,510 569,570 577,520 582,574 590,530 593,568 596,540 598,425 600,570 603,560 605,462 608,570 616,530 620,570 625,560 630,576 643,576", 20, 1.2, 8, 578), c: "#2f7a2b", w: 1.1 },
  { d: trace("625,570 631,552 636,570 646,573", 4), c: "#efce66" },
  { d: trace("669,552 674,570 682,528 684,562 694,560 698,570 701,530 704,528 708,575 722,576", 12, 1.4, 8, 578), c: "#3274d9" },
  { d: trace("773,570 776,291 778,560 780,455 783,570 786,448 789,560 800,545 804,568 834,570 836,218 838,370 839,276 841,570 847,565 849,430 852,572 868,574", 12, 1.4, 4, 578), c: "#5d4690", w: 1.2 },
  { d: trace("790,577 802,576"), c: "#3d3a52" },
  { d: trace("806,565 812,570 832,568", 6), c: "#7fa37f" },
  { d: trace("836,570 843,555 848,572", 5), c: "#c9a227" },
  { d: trace("880,572 884,570 930,570 970,573", 8, 1.5, 2, 578), c: "#63ad58" },
  { d: trace("985,573 988,291 990,570 1000,570", 3), c: "#3a8b34", w: 1.2 },
  { d: trace("990,570 997,550 1003,572 1008,577 1018,577", 5), c: "#f3cf99" },
  { d: trace("1018,562 1021,572 1030,570 1032,530 1035,574 1045,570 1048,545 1052,572 1058,524 1060,562 1068,570 1084,570", 6, 1.6), c: "#3b7fd0" },
  { d: trace("1164,570 1168,577 1176,540 1179,570 1181,505 1184,570 1188,455 1191,570 1193,360 1195,470 1197,560 1199,400 1201,570 1204,478 1206,380 1208,378 1211,574 1214,382 1216,470 1218,435 1221,520", 8, 1.6, 4, 578), c: "#e49ad8", w: 1.2 },
];
const FTP_IO: Line[] = [
  { d: trace("138,567 142,553 153,552 155,530 158,462 160,465 162,552 164,500 167,352 169,460 172,550 176,545 178,552 187,543 190,553 194,544 197,554 219,552 221,470 222,470 223,405 224,470 226,540 228,554 239,553 242,540 246,555 251,548 253,535 255,555 273,553 275,541 278,553 302,552 307,545 315,560 320,550 334,551 380,555 430,554 470,556 484,555 504,556 508,562 518,556", 4.5, 1.6, 3), c: "#4da343" },
  { d: trace("337,560 339,554 366,555 370,552 400,554 430,554 441,554 442,230 444,212 445,201 446,420 448,530 452,554 480,554 504,554 515,557 540,554 547,560", 4, 1.8, 9), c: "#e0b400", w: 1.2 },
];
const FTP_CPU: Line[] = [
  { d: trace("79,543 81,556 88,556 95,558 97,487 98,556 100,347 102,530 105,555 130,555 170,552 184,560 187,542 190,556 230,556 250,553 258,540 260,556 264,538 267,554 282,543 290,554 330,555 370,551 400,550 425,556 470,556 475,545 490,545", 9, 1.3, 5, 567), c: "#4da343" },
  { d: trace("282,553 286,548 288,560 330,558 370,558 390,558 395,555 396,203 397,203 399,545 402,558 430,560 470,556 478,548 482,558 495,553 500,552 520,555", 9, 1.3, 6, 567), c: "#e0b400" },
];
const OD_G = "81,1084 97,1084 100,1040 106,1070 120,1062 130,1040 134,1070 150,1065 158,1022 164,1060 176,1040 184,1055 200,1058 222,1065 226,1035 230,1070 250,1065 262,1038 275,1060 296,1055 305,1004 312,1040 330,1042 350,1025 355,1040 380,1050 396,1015 399,1070 410,1084 415,1065 421,1000 425,1060 440,1050 444,1075 480,1062 520,1068 551,1068 554,1028 558,1068 590,1070 604,1038 612,1072 650,1062 690,1050 710,1070 734,1045 740,1068 780,1062 820,1070 832,1055 836,994 840,1050 846,1018 850,1066 860,1088 870,1075 880,1028 888,1070 920,1060 960,1070 1000,1070 1050,1068 1100,1068 1150,1066 1200,1066 1250,1070 1290,1060 1310,1088 1325,1065 1360,1062 1380,1058 1400,1055 1420,1060 1445,1050 1455,1060 1463,1035 1470,1065 1480,1055 1490,1060 1495,1020 1500,1070 1510,1065 1514,1000 1518,1065 1524,1050 1530,1010 1540,1030 1548,1040 1556,1065 1561,988 1564,1065 1576,1060 1602,1070 1630,1060 1650,1075 1662,1000 1670,1070 1684,1030 1696,1022 1699,1075 1725,1075 1735,1010 1740,1068 1753,1055 1766,1082 1778,1068 1792,1042 1800,1070 1820,1062 1850,1062 1876,1022 1882,1055 1925,1050 1930,982 1936,1062 1970,1062 1990,1030 2000,1060 2011,1000 2016,1040 2025,1035 2028,1060 2045,1072 2070,1055 2100,1060 2140,1062 2160,1055 2180,1050 2182,1010 2200,1030 2205,1072 2225,1060 2230,975 2234,1055 2237,947 2241,1065 2253,1050 2257,1010 2262,1060 2274,1055 2277,968 2281,1058 2305,1050 2309,1030 2320,1055 2360,1058 2390,1062 2410,1045 2440,1065 2465,1045 2500,1060 2540,1065 2548,1040 2575,1050 2590,1045 2610,1070 2630,1070 2655,1082 2680,1055 2690,1078 2712,1060 2718,1000 2723,962 2727,1045 2730,975 2738,1060 2750,1055 2756,1015 2765,1065 2772,1070 2776,1045 2780,1078";
const OD_Y = "1464,1106 1468,1090 1471,1106 1474,1108 1477,960 1480,920 1482,1106 1492,1106 1494,905 1496,905 1497,1106 1504,1106 1506,915 1508,1106 1524,1106 1525,915 1527,1106 1529,860 1531,1000 1532,1106 1534,1106 1536,848 1540,890 1543,870 1545,843 1547,1000 1548,1106";
const OD_Y2 = "1642,1106 1645,970 1648,1106 1650,900 1652,1106 1653,857 1657,875 1660,1106 1663,1020 1665,880 1669,852 1671,1106 1674,868 1676,1106 1680,1000 1682,1106 1684,890 1686,1000 1689,860 1695,850 1697,1106 1710,1106 1712,985 1715,1106 1723,1040 1725,1106 1730,1106 1733,880 1736,857 1738,1106 1740,1108 1743,880 1745,868 1747,1106";

const yTicks = (labels: string[], from: number, step: number): Tick[] => labels.map((t, i) => ({ t, at: from + step * i }));
const GREEN = "#56a64b";
const YELLOW = "#e0b400";

const tenMin: Tick[] = Array.from({ length: 36 }, (_, i) => ({ t: clock(360 + i * 10), at: 97 + 75.01 * i }));

function GrafanaMark() {
  return (
    <>
      <svg className="absolute h-0 w-0">
        <defs>
          <linearGradient id="mark" x1="0" x2="0" y1="1" y2="0">
            <stop offset="0" stopColor="#fcc515" />
            <stop offset=".5" stopColor="#f1742a" />
            <stop offset="1" stopColor="#ea5a2b" />
          </linearGradient>
        </defs>
      </svg>
      <SiGrafana size={22} fill="url(#mark)" />
    </>
  );
}

export default function App() {
  return (
    <div className="h-[2231px] w-[2010px] overflow-hidden bg-[#f4f5f5] font-[Inter,sans-serif]">
      <div className="relative h-[1156px] overflow-hidden pl-[15px] pt-[128px]">
        <div className="absolute left-0 top-[209px] h-[31px] w-[15px] rounded-l-[3px] bg-[#3871dc]" />
        <Row title="Mirror Status" />
        <Panel title="Most used repos" className="relative h-[352px] w-[986px]"><HeatMap /></Panel>
        <Row title="Anti Scraper" />
        <div className="flex gap-[8px]">
          <Panel title="IPv4 Request Average" className="h-[352px] w-[986px]"><GeoMap mode="req" /></Panel>
          <Panel title="IPv4 Bandwidth Average" className="h-[352px] w-[986px]"><GeoMap mode="bw" /></Panel>
        </div>
        <div className="mt-[8px] flex gap-[8px]">
          <Panel title="IPv4 Top Requests" className="h-[351px] w-[986px]"><TopRequests /></Panel>
          <Panel title="IPv4 Top Bandwidth" className="h-[351px] w-[986px]"><TopBandwidth /></Panel>
        </div>
      </div>

      <header className="border-t border-[#bfc1c3] bg-white text-[13.4px] text-[#3b3f45]">
        <div className="flex h-[38px] items-center border-b border-[#e8eaeb] pl-[11px] pt-px">
          <GrafanaMark />
          <ChevronDown size={10} strokeWidth={2.6} className="ml-[2px]" />
          <nav className="ml-[13px] flex items-center font-medium">
            <span>Home</span>
            <span className="w-[23px] pb-[2px] text-center text-[15px]">›</span>
            <span>combined</span>
            <span className="w-[23px] pb-[2px] text-center text-[15px]">›</span>
            <span className="font-normal text-[#6a6e73]">ZJU Mirror</span>
          </nav>
          <div className="ml-[1078px] flex h-[30px] w-[457px] items-center rounded-[2px] border border-[#c6c8ca] bg-white px-[7px]">
            <Search size={15} className="text-[#4f5359]" />
            <span className="ml-[3px] text-[#6f7378]">Search or jump to...</span>
            <KeysIcon />
            <span className="ml-[4px] text-[11.5px] text-[#6a6e73]">ctrl+k</span>
          </div>
          <div className="ml-auto flex w-[187px] items-center text-[#55595f]">
            <Plus size={16} strokeWidth={1.9} />
            <ChevronDown size={11} strokeWidth={2.8} className="ml-[3px]" />
            <span className="ml-[14px] h-6 w-px bg-[#bfc1c3]" />
            <HelpIcon />
            <FeedIcon />
            <ScreenIcon />
            <span className="ml-[17px] flex h-[22px] w-[22px] shrink-0 items-end justify-center overflow-hidden rounded-full bg-[#c2c4c6]">
              <svg width="16" height="18" viewBox="0 0 16 18" fill="#fff"><circle cx="8" cy="8" r="4.8" /><path d="M1 19a7 8 0 0 1 14 0Z" /></svg>
            </span>
          </div>
        </div>
        <div className="flex h-[38px] items-center justify-end border-b border-[#e8eaeb] text-[11.7px] font-medium">
          <Star size={16} className="mr-[24px] text-[#3b3f45]" />
          <span className="mr-[12px] h-[22px] w-px bg-[#c3c5c7]" />
          <button className="h-[23px] w-9 rounded-[2px] border border-[#d6d8d9] bg-[#eceded] text-[#24292e]">Edit</button>
          <span className="ml-[11px] mr-[8px] h-[22px] w-px bg-[#b5b7b9]" />
          <button className="flex h-[23px] w-[68px] items-center justify-center gap-[5px] rounded-[2px] border border-[#d6d8d9] bg-[#eceded] text-[#24292e]">
            Export <ChevronDown size={10} strokeWidth={2.8} />
          </button>
          <button className="ml-[8px] h-[23px] w-[46px] rounded-l-[2px] bg-[#3871dc] text-white">Share</button>
          <button className="ml-px flex h-[23px] w-[14px] items-center bg-[#3871dc] pl-[5px] text-white"><ChevronDown size={9} strokeWidth={3} className="shrink-0" /></button>
        </div>
      </header>

      <div className="flex h-[47px] items-start justify-end gap-[8px] pr-px pt-[15px] text-[13.6px] font-medium text-[#303439]">
        <div className="flex h-[30px] rounded-[2px] border border-[#d2d4d5] bg-[#e1e3e3]">
          <span className="flex w-[146px] items-center pl-[8px]">
            <ClockIcon /><span className="ml-[9px]">Last 6 hours</span><ChevronDown size={12} strokeWidth={2.8} className="ml-[11px]" />
          </span>
          <span className="flex w-[33px] items-center justify-center border-l border-[#c8cacb]"><ZoomOut size={16} strokeWidth={2.2} /></span>
        </div>
        <div className="flex h-[30px] rounded-[2px] border border-[#d2d4d5] bg-[#e1e3e3]">
          <span className="flex w-[91px] items-center pl-[7px]"><SyncIcon /><span className="ml-[8px]">Refresh</span></span>
          <span className="flex w-[30px] items-center justify-center border-l border-[#c8cacb]"><ChevronDown size={12} strokeWidth={2.8} /></span>
        </div>
      </div>

      <main className="pl-[15px]">
        <Row title="Host" />
        <div className="flex gap-[8px]">
          <div className="flex w-[986px] justify-between">
            <Panel title="Host CPU Load" className="h-[245px] w-[489px]">
              <Stat value="3.40" keys={CPU} box={[16, 1356, 487, 213]} seed={2} amp={6} />
            </Panel>
            <Panel title="Host Memory Percent" className="h-[245px] w-[489px]">
              <Stat value="52.4" keys={MEM} box={[513, 1356, 487, 213]} seed={8} amp={11} />
            </Panel>
          </div>
          <Panel title="Host Network" className="h-[245px] w-[986px]">
            <Plot
              box={[1010, 1355, 984, 213]}
              o={[1000, 1290]}
              area={[127, 243, 1520, 661]}
              yRight={110}
              xLabel={703}
              ys={yTicks(["140 MB/s", "120 MB/s", "100 MB/s", "80 MB/s", "60 MB/s", "40 MB/s", "20 MB/s", "0 B/s"], 271, 55.7)}
              xs={half(127, 116.8)}
              lines={[
                { d: trace(RX, 3, 2.6, 5, 659), c: "#4da343" },
                { d: trace(TX, 17, 1.8, 3), c: YELLOW, w: 1.1 },
              ]}
            />
            <div className="absolute bottom-[10px] left-[12px] flex gap-[9px]">
              <Key c={GREEN} t="receive" />
              <Key c={YELLOW} t="transmit" />
            </div>
          </Panel>
        </div>
        <Row title="Dockers" />
        <div className="-mt-px flex gap-[8px]">
          <Panel title="jobs-rsync I/O rate" className="h-[208px] w-[986px]">
            <Plot
              box={[16, 1643, 784, 176]}
              o={[0, 1570]}
              area={[140, 268, 1230, 668]}
              yRight={125}
              xLabel={711}
              ys={yTicks(["200 MB/s", "175 MB/s", "150 MB/s", "125 MB/s", "100 MB/s", "75 MB/s", "50 MB/s", "25 MB/s", "0 B/s"], 268, 50.1)}
              xs={half(140, 91.4)}
              lines={IO_LINES}
            />
            <div className="ml-[4px] mt-[10px] h-[159px] flex-1 overflow-hidden">
              <Key c={GREEN} t="job-rsync-CPAN" />
              <Key c={YELLOW} t="job-rsync-CRAN" />
              <Key c="#5794f2" t="job-rsync-CTAN" />
              <Key c="#f26f10" t="job-rsync-almalinux" />
              <Key c="#d6324a" t="job-rsync-alpine" />
              <Key c="#3274d9" t="job-rsync-archlinux" />
              <Key c="#a352cc" t="job-rsync-archlinuxcn" />
              <Key c="transparent" t="job-rsync-centos-altarch" />
            </div>
            <div className="mr-[8px]"><ScrollBar /></div>
          </Panel>
          <Panel title="jobs-rsync CPU %" className="h-[208px] w-[986px]">
            <Plot
              box={[1010, 1643, 784, 176]}
              o={[1000, 1600]}
              area={[79, 180, 1221, 578]}
              yRight={63}
              xLabel={620}
              ys={yTicks(["100", "80", "60", "40", "20", "0"], 191, 77.5)}
              xs={half(79, 95.8)}
              lines={CPU_LINES}
            />
            <div className="ml-[4px] mt-[10px] h-[159px] flex-1 overflow-hidden">
              <Key c={GREEN} t="job-rsync-archlinux" />
              <Key c={YELLOW} t="job-rsync-raspberrypi" />
              <Key c="#5794f2" t="job-rsync-manjaro" />
              <Key c="#f26f10" t="job-rsync-debian-security" />
              <Key c="#d6324a" t="job-rsync-fedora" />
              <Key c="#3274d9" t="job-rsync-CPAN" />
              <Key c="#a352cc" t="job-rsync-rocky" />
              <Key c="transparent" t="job-rsync-gnu" />
            </div>
            <div className="mr-[8px]"><ScrollBar /></div>
          </Panel>
        </div>
        <div className="mt-[8px] flex gap-[8px]">
          <Panel title="jobs-ftpsync I/O rate" className="h-[208px] w-[986px]">
            <Plot
              box={[16, 1859, 832, 176]}
              o={[0, 1820]}
              area={[130, 166, 1306, 568]}
              yRight={114}
              xLabel={608}
              ys={yTicks(["90 MB/s", "80 MB/s", "70 MB/s", "60 MB/s", "50 MB/s", "40 MB/s", "30 MB/s", "20 MB/s", "10 MB/s", "0 B/s"], 183, 42.7)}
              xs={half(130, 98.65)}
              lines={FTP_IO}
            />
            <div className="ml-[5px] mt-[10px]">
              <Key c={GREEN} t="job-ftpsync-debian" />
              <Key c={YELLOW} t="job-ftpsync-kali" />
            </div>
          </Panel>
          <Panel title="jobs-ftpsync CPU %" className="h-[208px] w-[986px]">
            <Plot
              box={[1010, 1859, 832, 176]}
              o={[1000, 1820]}
              area={[71, 165, 1297, 567]}
              yRight={56}
              xLabel={608}
              ys={yTicks(["70", "60", "50", "40", "30", "20", "10", "0"], 165, 57.4)}
              xs={half(71, 102.75)}
              lines={FTP_CPU}
              over={<circle cx={1835.3} cy={1990} r={2.2} fill={GREEN} />}
            />
            <div className="ml-[5px] mt-[10px]">
              <Key c={GREEN} t="job-ftpsync-debian" />
              <Key c={YELLOW} t="job-ftpsync-kali" />
            </div>
          </Panel>
        </div>
        <Panel title="other docker" className="mt-[8px] h-[172px] w-[1980px]">
          <Plot
            box={[16, 2075, 1784, 140]}
            o={[0, 1820]}
            area={[88, 814, 2780, 1107]}
            yRight={73}
            xLabel={1148}
            ys={yTicks(["100", "80", "60", "40", "20", "0"], 826, 56.2)}
            xs={tenMin}
            lines={[
              { d: trace(OD_G, 27, 2, 7, 1092), c: "#63ad58" },
              { d: trace("81,1106 1088,1106 1090,1094 1093,1106 1464,1106"), c: "#e3bf2e", w: 1.6 },
              { d: trace("1548,1106 1642,1106"), c: "#e3bf2e", w: 1.6 },
              { d: trace("1747,1106 2780,1106"), c: "#e3bf2e", w: 1.6 },
              { d: trace(OD_Y), c: YELLOW, w: 1.2 },
              { d: trace(OD_Y2), c: YELLOW, w: 1.2 },
            ]}
          />
          <div className="ml-[4px] mt-[10px]">
            <Key c={GREEN} t="nginx-docker-nginx-1" />
            <Key c={YELLOW} t="zjumirror_docker-registry-1" />
          </div>
        </Panel>
      </main>
    </div>
  );
}
